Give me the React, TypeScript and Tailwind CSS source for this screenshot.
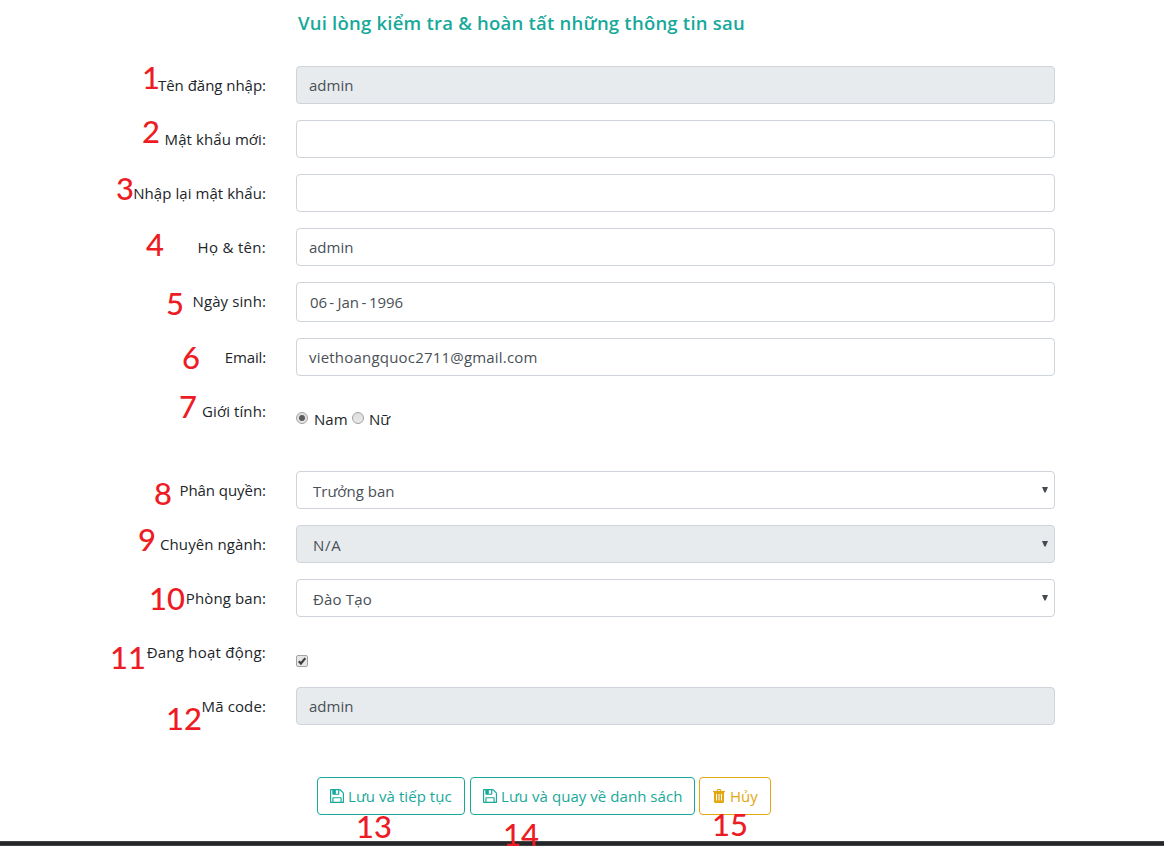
import type { ReactNode } from "react";

const control =
  "flex w-[759px] items-center rounded border border-[#ced4da] text-[15px] text-[#495057]";

function Row({ label, tracking, height = "h-[38px]", children }: { label: string; tracking: string; height?: string; children: ReactNode }) {
  return (
    <div className={`flex ${height}`}>
      <div className="w-[296px] pr-[30px] pt-[7px] text-right text-[15px] leading-6 whitespace-nowrap">
        <span className={tracking}>{label}</span>
      </div>
      {children}
    </div>
  );
}

function Field({ children, tracking = "", disabled = false, tall = false }: { children?: ReactNode; tracking?: string; disabled?: boolean; tall?: boolean }) {
  return (
    <div className={`${control} ${tall ? "h-10 pl-[13px]" : "h-[38px] pl-3"} ${disabled ? "bg-[#e7ebee]" : "bg-white"}`}>
      <span className={tracking}>{children}</span>
    </div>
  );
}

function Select({ value, tracking = "", disabled = false }: { value: string; tracking?: string; disabled?: boolean }) {
  return (
    <div className={`${control} h-[38px] justify-between pl-4 pr-[6px] ${disabled ? "bg-[#e7ebee]" : "bg-white"}`}>
      <span className={`pt-[2px] ${tracking}`}>{value}</span>
      <svg className="mb-px h-[6px] w-[6px]" viewBox="0 0 6 6">
        <path d="M0 0h6L3.6 5.5H2.4z" fill="#434a50" />
      </svg>
    </div>
  );
}

function Radio({ checked = false }: { checked?: boolean }) {
  return (
    <svg className="h-3 w-3" viewBox="0 0 12 12">
      <defs>
        <linearGradient id="radio" x1="0" y1="0" x2="0" y2="1">
          <stop offset="0" stopColor="#dedede" />
          <stop offset="1" stopColor="#e9e9e9" />
        </linearGradient>
      </defs>
      <circle cx="6" cy="6" r="5.5" fill="url(#radio)" stroke="#a3a3a3" />
      {checked && <circle cx="6" cy="6" r="3" fill="#5b5b5b" />}
    </svg>
  );
}

function SaveIcon() {
  return (
    <svg className="h-[14px] w-[14px]" viewBox="0 0 1536 1536" fill="currentColor">
      <path d="M384 1408h768v-384H384zm896 0h128V512q0-14-10-38.500t-20-34.500l-281-281q-10-10-34-20t-39-10v416q0 40-28 68t-68 28H352q-40 0-68-28t-28-68V128H128v1280h128V992q0-40 28-68t68-28h832q40 0 68 28t28 68zM896 480V160q0-13-9.500-22.500T864 128H672q-13 0-22.500 9.500T640 160v320q0 13 9.500 22.500T672 512h192q13 0 22.500-9.500T896 480zm640 32v928q0 40-28 68t-68 28H96q-40 0-68-28t-28-68V96q0-40 28-68T96 0h928q40 0 88 20t76 48l280 280q28 28 48 76t20 88z" />
    </svg>
  );
}

function TrashIcon() {
  return (
    <svg className="h-[14px] w-3" viewBox="0 0 12 14" fill="currentColor" fillRule="evenodd">
      <path d="M3.500 2 4 .6Q4.200 0 4.800 0h2.400Q7.800 0 8 .6L8.500 2H12v1.200h-1V12.500Q11 14 9.600 14H2.400Q1 14 1 12.500V3.200H0V2zM4.700 2h2.600L7 1H5zM3 5v6.500h1V5zm2.500 0v6.500h1V5zM8 5v6.500h1V5z" />
    </svg>
  );
}

const badges = [
  { n: "1", place: "left-[142px] top-[62px]" },
  { n: "2", place: "left-[142px] top-[116px]" },
  { n: "3", place: "left-[116px] top-[173px]" },
  { n: "4", place: "left-[146px] top-[229px]" },
  { n: "5", place: "left-[166px] top-[288px]" },
  { n: "6", place: "left-[182px] top-[342px]" },
  { n: "7", place: "left-[179px] top-[391px]" },
  { n: "8", place: "left-[154px] top-[478px]" },
  { n: "9", place: "left-[138px] top-[524px]" },
  { n: "10", place: "left-[149px] top-[583px]" },
  { n: "11", place: "left-[110px] top-[642px]" },
  { n: "12", place: "left-[166px] top-[703px]" },
  { n: "13", place: "left-[356px] top-[811px]" },
  { n: "14", place: "left-[503px] top-[819px]" },
  { n: "15", place: "left-[712px] top-[809px]" },
];

export default function App() {
  return (
    <div className="relative h-[860px] w-[1164px] overflow-hidden bg-white font-['Open_Sans','Noto_Sans',sans-serif] text-[#212529]">
      <h1 className="h-[66px] pl-[298px] pt-[9px] text-[18.5px] font-semibold leading-7 text-[#17a99a]">
        <span className="tracking-[0.22px]">Vui lòng kiểm tra &amp; hoàn tất những thông tin sau</span>
      </h1>
      <div className="flex flex-col gap-4">
        <Row label="Tên đăng nhập:" tracking="tracking-[-0.03px]"><Field disabled>admin</Field></Row>
        <Row label="Mật khẩu mới:" tracking="tracking-[0.08px]"><Field /></Row>
        <Row label="Nhập lại mật khẩu:" tracking="tracking-[0.06px]"><Field /></Row>
        <Row label="Họ & tên:" tracking="tracking-[0.3px]"><Field>admin</Field></Row>
        <Row label="Ngày sinh:" tracking="tracking-[0.1px]" height="h-10">
          <Field tall>06<span className="pl-[2px] pr-[3.5px]">-</span>Jan<span className="px-[2.5px]">-</span>1996</Field>
        </Row>
        <Row label="Email:" tracking="tracking-[-0.15px]"><Field tracking="tracking-[0.2px]">viethoangquoc2711@gmail.com</Field></Row>
        <Row label="Giới tính:" tracking="tracking-[0.1px]" height="h-[63px]">
          <div className="flex h-6 items-center pt-[26px] text-[15px]">
            <Radio checked />
            <span className="ml-[6px] w-[38px] pt-[2px]">Nam</span>
            <Radio />
            <span className="ml-[5px] pt-[2px]">Nữ</span>
          </div>
        </Row>
        <Row label="Phân quyền:" tracking="tracking-[-0.05px]"><Select value="Trưởng ban" /></Row>
        <Row label="Chuyên ngành:" tracking="tracking-[0.08px]"><Select value="N/A" disabled tracking="tracking-[0.7px]" /></Row>
        <Row label="Phòng ban:" tracking="tracking-[0.1px]"><Select value="Đào Tạo" tracking="tracking-[0.15px]" /></Row>
        <Row label="Đang hoạt động:" tracking="tracking-[0.24px]">
          <svg className="mt-[22px] h-3 w-3" viewBox="0 0 12 12">
            <rect x=".5" y=".5" width="11" height="11" rx="1.500" fill="#e6e6e6" stroke="#a3a3a3" />
            <path d="M2.800 6.300 4.900 8.500 9.300 3.100" fill="none" stroke="#3f3f3f" strokeWidth="2.200" />
          </svg>
        </Row>
        <Row label="Mã code:" tracking="tracking-[0.12px]"><Field disabled>admin</Field></Row>
      </div>
      <div className="mt-[52px] flex pl-[317px] text-[15px] tracking-[0.05px] whitespace-nowrap">
        <button className="flex h-[38px] w-[148px] items-center gap-1 rounded border border-[#17a99a] pl-3 text-[#17a99a]">
          <SaveIcon /><span>Lưu và tiếp tục</span>
        </button>
        <button className="ml-[5px] flex h-[38px] w-[225px] items-center gap-1 rounded border border-[#17a99a] pl-3 text-[#17a99a]">
          <SaveIcon /><span>Lưu và quay về danh sách</span>
        </button>
        <button className="ml-1 flex h-[38px] w-[72px] items-center gap-[5px] rounded border border-[#e3a70f] pl-[13px] text-[#e3a70f]">
          <TrashIcon /><span>Hủy</span>
        </button>
      </div>
      <div className="mt-[26px] h-[5px] border-y border-[#414244] bg-[#242628]" />
      {badges.map((b) => (
        <span key={b.n} className={`absolute font-['Lato',sans-serif] text-[31px] font-medium leading-[31px] text-[#ed1c24] ${b.place}`}>
          {b.n}
        </span>
      ))}
    </div>
  );
}
